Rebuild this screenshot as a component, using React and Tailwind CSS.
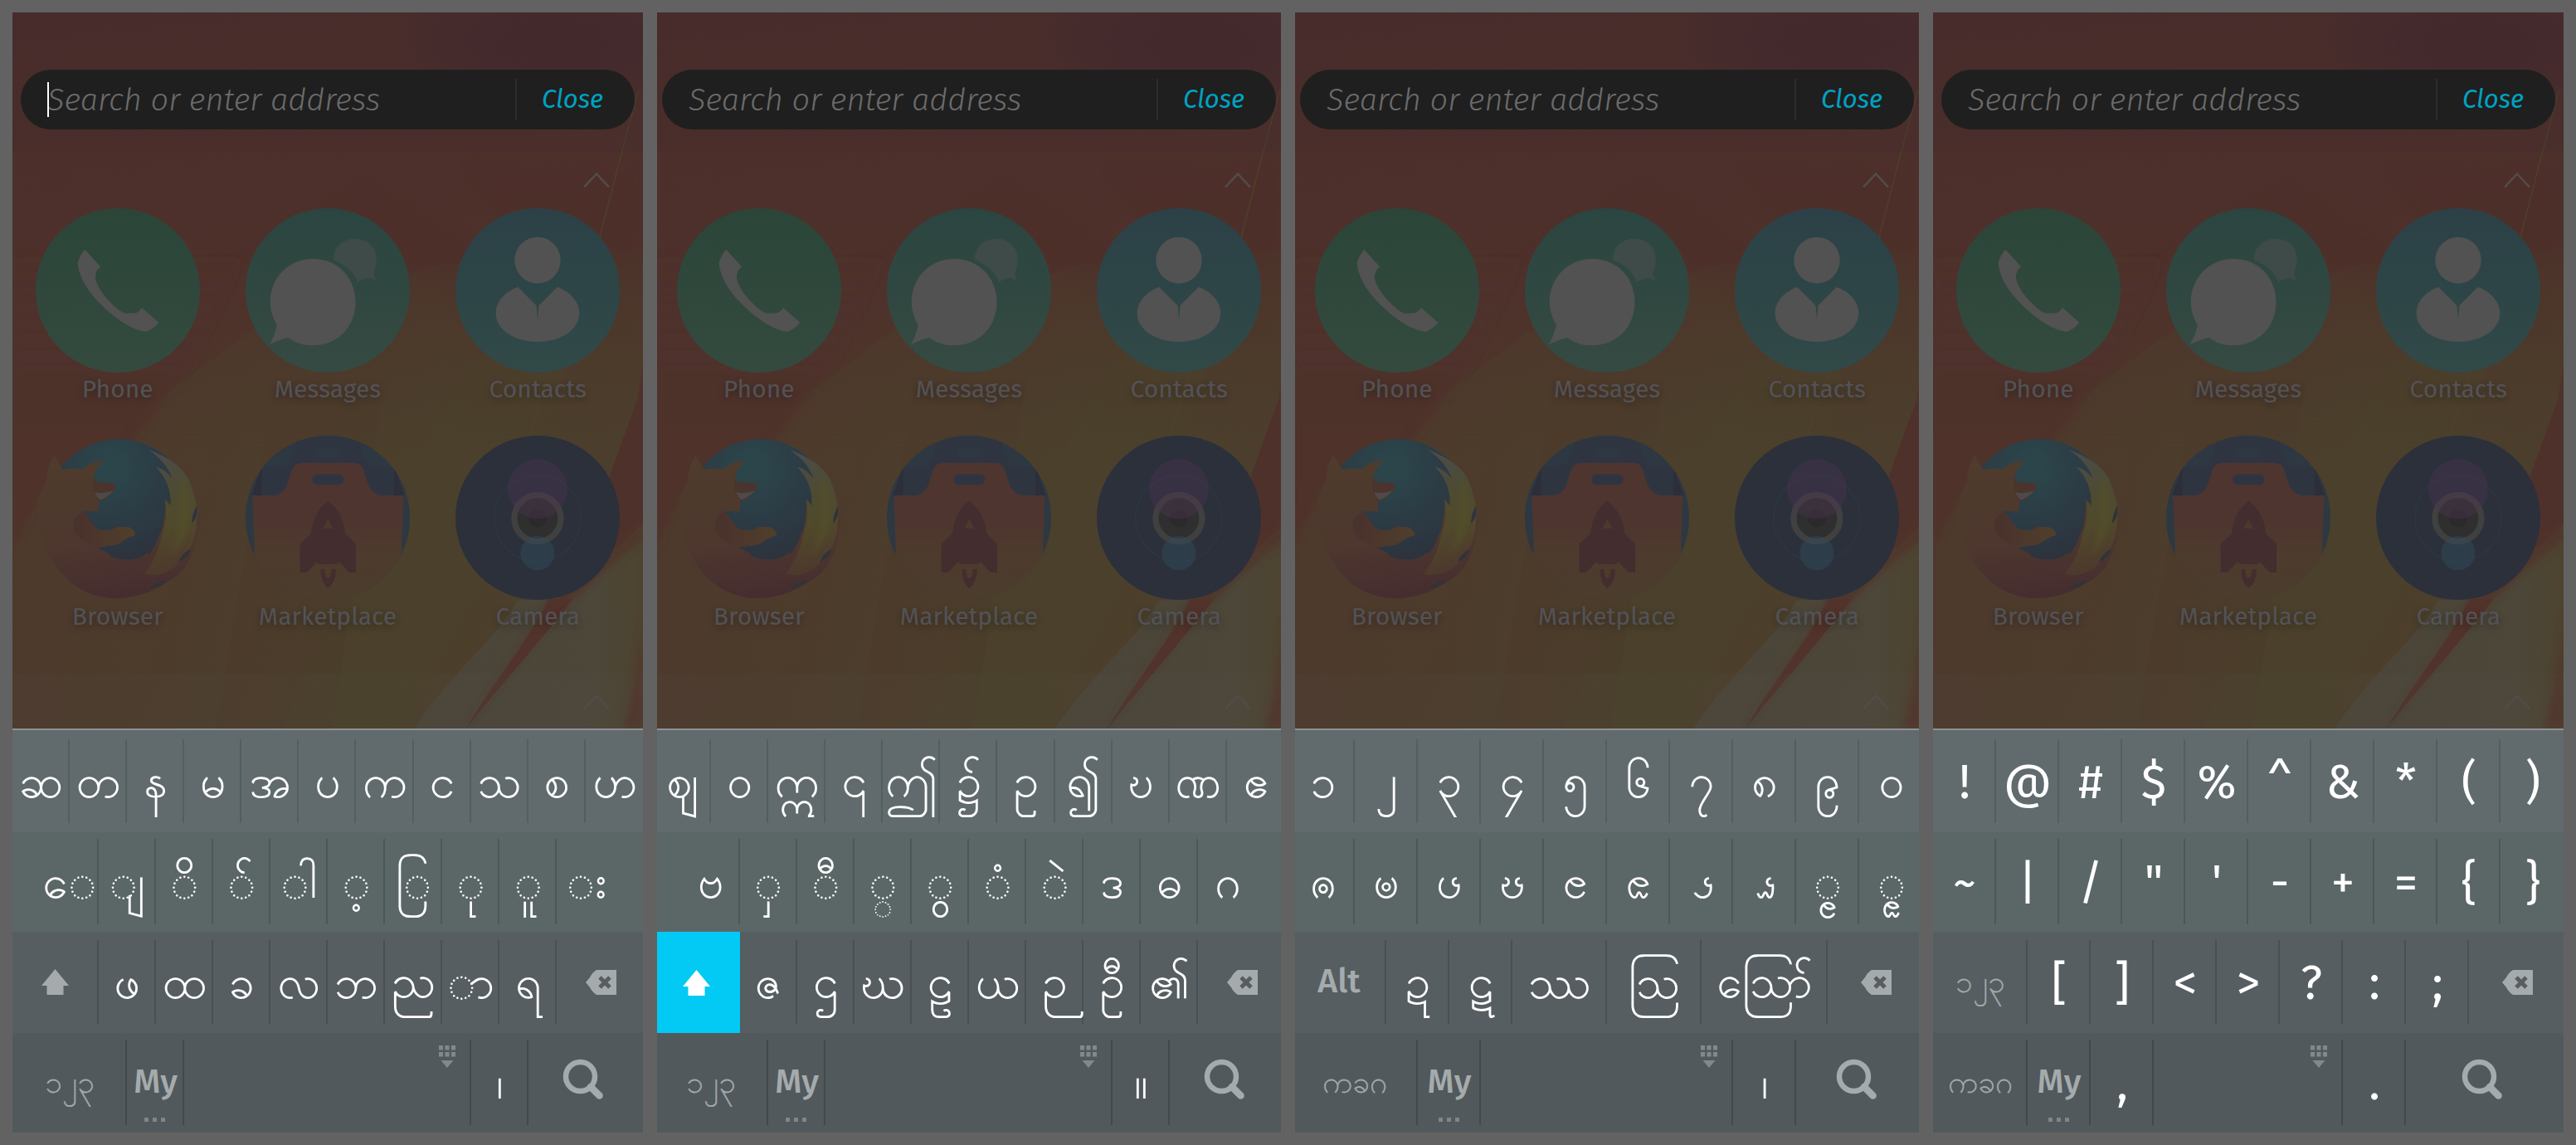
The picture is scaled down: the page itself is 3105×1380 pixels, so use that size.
import React from "react";

const SIZES = {
  key: "text-[55px] leading-[66px] translate-y-[1px]",
  latin: "text-[57px] leading-[68px] translate-y-[1px]",
  label: "text-[41px] leading-[50px] text-[#a5abac] font-medium -translate-y-[1px]",
  small: "text-[37px] leading-[44px] text-[#a0a7a8]",
};

function Wallpaper() {
  return (
    <svg className="absolute inset-0 h-full w-full" viewBox="15 15 760 863" preserveAspectRatio="none">
      <defs>
        <linearGradient id="base" x1="0" y1="0" x2="0.1" y2="1">
          <stop offset="0" stopColor="#4b2e2b" />
          <stop offset="0.4" stopColor="#4e312b" />
          <stop offset="0.65" stopColor="#4d382b" />
          <stop offset="1" stopColor="#4d3c2f" />
        </linearGradient>
        <linearGradient id="olive" x1="0" y1="0" x2="1" y2="0.2">
          <stop offset="0" stopColor="#4d392c" />
          <stop offset="0.35" stopColor="#4d3b2c" />
          <stop offset="0.7" stopColor="#4b402c" />
          <stop offset="1" stopColor="#4c3e2c" />
        </linearGradient>
        <linearGradient id="oliveFade" x1="0" y1="0" x2="0" y2="1">
          <stop offset="0" stopColor="#fff" stopOpacity="0" />
          <stop offset="0.45" stopColor="#fff" />
        </linearGradient>
        <mask id="oliveMask">
          <rect x="0" y="250" width="800" height="650" fill="url(#oliveFade)" />
        </mask>
        <linearGradient id="pale" x1="0" y1="0" x2="1" y2="0">
          <stop offset="0" stopColor="#4b4539" />
          <stop offset="0.8" stopColor="#4c4739" />
          <stop offset="1" stopColor="#4d432f" />
        </linearGradient>
        <linearGradient id="leftRed" x1="0" y1="0" x2="0" y2="1">
          <stop offset="0" stopColor="#4e302b" stopOpacity="0" />
          <stop offset="0.4" stopColor="#4e312c" />
          <stop offset="1" stopColor="#4f332c" />
        </linearGradient>
        <radialGradient id="plum">
          <stop offset="0" stopColor="#472a2d" />
          <stop offset="0.5" stopColor="#472a2d" stopOpacity=".8" />
          <stop offset="1" stopColor="#472a2d" stopOpacity="0" />
        </radialGradient>
        <filter id="soft"><feGaussianBlur stdDeviation="5" /></filter>
      </defs>
      <rect x="15" y="15" width="760" height="863" fill="url(#base)" />
      <ellipse cx="670" cy="50" rx="190" ry="90" fill="url(#plum)" />
      <path d="M250 320L440 220L640 330L560 200H775V430L600 400L430 280Z" fill="#4d2c2b" filter="url(#soft)" opacity=".18" />
      <path d="M140 520L300 400L520 320L775 300V878H15V640Z" fill="url(#olive)" mask="url(#oliveMask)" />
      <path d="M330 470L470 420L400 878H260Z" fill="#4d392c" opacity=".35" />
      <path d="M560 440L690 400L640 600L540 780L490 878H340Z" fill="#4b412c" opacity=".35" />
      <path d="M15 300H300L230 440L150 545L50 590L15 668Z" fill="url(#leftRed)" filter="url(#soft)" />
      <path d="M775 440L768 482L735 573V660H775Z" fill="#4f312b" />
      <path d="M775 632C725 680 690 715 655 722L623 724C600 770 552 800 499 878H775Z" fill="url(#pale)" />
      <path d="M775 628C725 675 700 705 660 722C640 770 600 820 560 878C620 800 660 740 775 650Z" fill="#50352b" filter="url(#soft)" />
      <path d="M662 722H690C650 775 600 830 562 878C595 820 640 770 662 722Z" fill="#51332b" />
      <path d="M775 740C770 800 760 850 752 878H775Z" fill="#51352c" filter="url(#soft)" />
      <path d="M770 108Q750 180 722 290L655 470Q600 650 504 815" fill="none" stroke="#4f442b" strokeWidth="2" opacity=".6" />
      <rect x="15" y="15" width="760" height="168" fill="#222428" opacity=".09" />
      <rect x="15" y="812" width="760" height="66" fill="#5f5f5f" opacity=".08" />
    </svg>
  );
}

function PhoneIcon() {
  return (
    <svg className="block size-[198px]" viewBox="0 0 198 198">
      <defs>
        <linearGradient id="ph" x1="0" y1="0" x2="0" y2="1">
          <stop offset="0" stopColor="#2b4539" />
          <stop offset="1" stopColor="#344a3f" />
        </linearGradient>
      </defs>
      <circle cx="99" cy="99" r="99" fill="url(#ph)" />
      <g transform="translate(-42 -251) scale(.5038 .3333)">
        <path d="M201 902L239 965Q226 975 226 1005Q232 1050 268 1102Q290 1135 302 1133L322 1132Q332 1128 337 1112L378 1166Q362 1194 346 1200Q310 1190 270 1142Q220 1080 200 1025Q184 980 184 950Q188 925 201 902Z" fill="#525252" />
      </g>
    </svg>
  );
}

function MessagesIcon() {
  return (
    <svg className="block size-[198px]" viewBox="0 0 198 198">
      <defs>
        <linearGradient id="ms" x1="0" y1="0" x2="0" y2="1">
          <stop offset="0" stopColor="#2b4540" />
          <stop offset="1" stopColor="#354a42" />
        </linearGradient>
      </defs>
      <circle cx="99" cy="99" r="99" fill="url(#ms)" />
      <g transform="translate(-295.7 -251) scale(.5038 .3333)">
        <path d="M848 863C880 863 900 895 900 935C900 960 896 975 893 990L900 1018Q890 1005 877 1006Q865 1012 854 1020Q845 970 797 940C797 895 818 863 848 863Z" fill="#3e4b49" />
        <path d="M748 936C808 936 850 1005 850 1092C850 1180 808 1249 748 1249C722 1249 704 1238 689 1220Q668 1228 644 1246Q656 1215 662 1176Q646 1135 646 1092C646 1005 690 936 748 936Z" fill="#525252" />
      </g>
    </svg>
  );
}

function ContactsIcon() {
  return (
    <svg className="block size-[198px]" viewBox="0 0 198 198">
      <defs>
        <linearGradient id="ct" x1="0" y1="0" x2="0" y2="1">
          <stop offset="0" stopColor="#2b4147" />
          <stop offset="1" stopColor="#314947" />
        </linearGradient>
      </defs>
      <circle cx="99" cy="99" r="99" fill="url(#ct)" />
      <g transform="translate(-549.4 -251) scale(.5038 .3333)" fill="#525252">
        <ellipse cx="1287" cy="941" rx="55" ry="84" />
        <path d="M1240 1038L1284 1105L1287 1155L1290 1105L1334 1038C1364 1054 1387 1090 1387 1132C1387 1190 1345 1236 1287 1236C1229 1236 1187 1190 1187 1132C1187 1090 1210 1054 1240 1038Z" />
      </g>
    </svg>
  );
}

function BrowserIcon() {
  return (
    <svg className="block size-[198px] overflow-visible" viewBox="0 0 198 198">
      <defs>
        <radialGradient id="globe" cx=".45" cy=".2" r=".8">
          <stop offset="0" stopColor="#2b474c" />
          <stop offset=".5" stopColor="#2c3a44" />
          <stop offset="1" stopColor="#2d2e38" />
        </radialGradient>
        <linearGradient id="fox" x1=".4" y1="0" x2=".5" y2="1">
          <stop offset="0" stopColor="#4f3c2c" />
          <stop offset=".6" stopColor="#4d372e" />
          <stop offset="1" stopColor="#452d30" />
        </linearGradient>
        <linearGradient id="tail" x1=".3" y1="0" x2=".4" y2="1">
          <stop offset="0" stopColor="#4b4c4d" />
          <stop offset=".35" stopColor="#4d4b32" />
          <stop offset=".6" stopColor="#504a2b" />
          <stop offset="1" stopColor="#4d382d" />
        </linearGradient>
        <linearGradient id="arm" x1="0" y1="0" x2="1" y2="0">
          <stop offset="0" stopColor="#4a312d" />
          <stop offset="1" stopColor="#503f2c" />
        </linearGradient>
        <filter id="foxSoft"><feGaussianBlur stdDeviation="10" /></filter>
      </defs>
      <g transform="translate(-12 -15) scale(.3333)">
        <circle cx="336" cy="322" r="264" fill="url(#globe)" />
        <path d="M76 210C76 165 90 135 103 117L124 152L134 168Q165 162 205 166Q240 136 284 136Q250 165 246 198L256 214L318 216Q328 222 324 236L290 272L264 284V318H212Q228 350 255 380Q280 392 310 386L330 376H372Q395 386 397 404Q375 410 360 420Q330 445 290 445Q270 450 258 448Q280 462 302 472Q300 480 310 482Q345 496 385 493Q420 488 440 468L445 474Q470 450 485 400Q500 380 506 276L530 300L575 340L612 350L630 315Q632 380 610 450Q580 540 516 572Q430 630 330 634Q200 632 120 530Q45 430 42 310Q50 250 76 210Z" fill="url(#fox)" />
        <path d="M442 95Q560 140 590 205Q625 290 618 350Q615 460 540 520Q490 560 430 545Q480 480 495 395Q515 340 504 276L524 300Q528 215 470 158Q505 165 530 200Q510 140 442 95Z" fill="url(#tail)" />
        <path d="M560 170Q600 250 585 380Q560 450 520 480Q570 360 556 250Z" fill="#54512a" opacity=".55" filter="url(#foxSoft)" />
        <path d="M246 198Q238 235 252 262L264 284L290 272L324 238L326 222Q310 214 256 214Z" fill="#4b342e" />
        <path d="M250 250Q285 258 318 243Q300 266 270 278Q255 268 250 250Z" fill="#4e4a47" />
        <path d="M212 318Q228 350 255 380Q280 392 310 386L330 376H372Q395 386 397 404Q375 410 360 420Q330 445 290 445Q210 445 178 395Q160 340 212 318Z" fill="url(#arm)" />
        <path d="M552 504Q560 475 594 455Q598 475 552 504ZM448 598Q460 576 508 570Q490 590 448 598ZM600 362Q602 325 618 300Q624 345 600 362Z" fill="#2f333c" />
      </g>
    </svg>
  );
}

function MarketplaceIcon() {
  return (
    <svg className="block size-[198px]" viewBox="0 0 198 198">
      <defs>
        <linearGradient id="bag" x1="0" y1="0" x2="0" y2="1">
          <stop offset="0" stopColor="#4e3530" />
          <stop offset=".4" stopColor="#4e352f" />
          <stop offset=".65" stopColor="#4d3b2d" />
          <stop offset="1" stopColor="#4c3d2d" />
        </linearGradient>
        <clipPath id="disc"><circle cx="99" cy="99" r="99" /></clipPath>
      </defs>
      <g clipPath="url(#disc)">
        <g transform="translate(-15.7 -15) scale(.3333)">
          <rect x="40" y="40" width="610" height="610" fill="#2d3842" />
          <path d="M234 40H456Q470 160 520 160H592L620 262H70L105 160H170Q220 150 234 40Z" fill="#2f3540" />
          <path d="M105 160L70 262H105ZM585 160L620 262H585Z" fill="#2c2e39" />
          <rect x="300" y="90" width="90" height="35" rx="14" fill="#2d3842" />
          <path d="M72 262H140Q185 262 200 215L214 170Q224 144 250 144H440Q466 144 474 170L488 215Q505 262 550 262H618L612 440L616 650H76L79 440Z" fill="url(#bag)" />
          <rect x="288" y="185" width="114" height="38" rx="19" fill="#2f3540" />
          <path d="M345 281Q400 320 408 400L446 436V540H422L386 502L376 510H315L305 502L268 540H244V436L284 400Q292 320 345 281Z" fill="#442d2f" />
          <path d="M345 346L363 382Q345 378 328 382Z" fill="#4e382e" />
          <path d="M318 528H334Q334 560 345 560Q357 560 357 528H374Q374 575 345 597Q318 575 318 528Z" fill="#442d2f" />
        </g>
      </g>
    </svg>
  );
}

function CameraIcon() {
  return (
    <svg className="block size-[198px]" viewBox="0 0 198 198">
      <circle cx="99" cy="99" r="99" fill="#2b303b" />
      <g transform="translate(-9.4 -15) scale(.3333)">
        <circle cx="325" cy="344" r="156" fill="none" stroke="#2c3543" strokeWidth="6" />
        <circle cx="325" cy="344" r="84" fill="#2f2f2f" stroke="#404040" strokeWidth="22" />
        <circle cx="325" cy="344" r="32" fill="#2a2a2a" />
        <circle cx="325" cy="238" r="108" fill="#4a3450" opacity=".42" />
        <circle cx="325" cy="470" r="62" fill="#2f4a57" opacity=".5" />
      </g>
    </svg>
  );
}

const APPS = [
  ["Phone", PhoneIcon],
  ["Messages", MessagesIcon],
  ["Contacts", ContactsIcon],
  ["Browser", BrowserIcon],
  ["Marketplace", MarketplaceIcon],
  ["Camera", CameraIcon],
];

function Chevron({ className }) {
  return (
    <svg className={className} viewBox="0 0 32 18" fill="none" stroke="currentColor" strokeWidth="2.500">
      <path d="M1 17.500L16 1.500L31 17.500" />
    </svg>
  );
}

function HomeScreen({ caret }) {
  return (
    <div className="relative h-[863px] overflow-hidden">
      <Wallpaper />
      <div className="relative flex h-full flex-col">
        <div className="mx-[10px] mt-[69px] flex h-[72px] shrink-0 items-center rounded-full bg-[#1f1f1f]">
          <div className="relative ml-[32px] flex-1 text-[38px] leading-[50px] font-light italic tracking-[0.04px] text-[#6b6b6b]">
            {caret && <span className="absolute top-[4px] left-0 h-[42px] w-[2px] bg-white" />}
            Search or enter address
          </div>
          <div className="h-[50px] w-[2px] bg-[#2c2c2c]" />
          <div className="w-[142px] pr-[8px] text-center text-[31px] italic text-[#00a2c2]">Close</div>
        </div>
        <Chevron className="mt-[52px] mr-[40px] h-[18px] w-[32px] self-end text-[#524d4b]" />
        <div className="mt-[25px] grid grid-cols-3">
          {APPS.map(([name, Icon]) => (
            <div key={name} className="flex h-[274px] flex-col items-center">
              <Icon />
              <div className="mt-[2px] text-[30px] leading-[36px] text-[#535256] [text-shadow:0_3px_8px_rgba(0,0,0,0.3)]">{name}</div>
            </div>
          ))}
        </div>
        <Chevron className="mt-[38px] mr-[40px] h-[18px] w-[32px] self-end text-[#504c4b]" />
      </div>
    </div>
  );
}

function Shift({ active }) {
  return (
    <svg className={active ? "h-[31px] w-[33px] text-white" : "h-[31px] w-[33px] text-[#a5abac]"} viewBox="0 0 33 31">
      <path d="M16.500 0L33 20H26.500V31H6.500V20H0Z" fill="currentColor" />
    </svg>
  );
}

function Backspace() {
  return (
    <svg className="h-[32px] w-[37px]" viewBox="0 0 37 32">
      <path d="M13 1H37V31H13Q8 28 5 22L0 16L5 10Q8 4 13 1Z" fill="#a5abac" />
      <path d="M17 10L29 22M29 10L17 22" stroke="#565e61" strokeWidth="5" />
    </svg>
  );
}

function Search() {
  return (
    <svg className="h-[50px] w-[50px]" viewBox="0 0 50 50" fill="none" stroke="#a5abac">
      <circle cx="21.500" cy="21.500" r="17.500" strokeWidth="6.500" />
      <path d="M34 34L44.500 44.500" strokeWidth="8.500" strokeLinecap="round" />
    </svg>
  );
}

function HideKeyboard() {
  return (
    <svg className="h-[27px] w-[20px]" viewBox="0 0 20 27" fill="#82898b">
      {[0, 7.5, 15].map((x) => (
        <React.Fragment key={x}>
          <rect x={x} y="0" width="5" height="5.500" />
          <rect x={x} y="8" width="5" height="5.500" />
        </React.Fragment>
      ))}
      <path d="M2.500 18H17.500L10 27Z" />
    </svg>
  );
}

function Content({ k }) {
  switch (k.t) {
    case "shift":
      return <Shift />;
    case "shiftOn":
      return <Shift active />;
    case "back":
      return <Backspace />;
    case "search":
      return <div className="-mt-[8px] mr-[8px]"><Search /></div>;
    case "space":
      return null;
    case "My":
      return (
        <>
          <span className={SIZES.label}>My</span>
          <span className="absolute inset-x-0 bottom-[4px] flex justify-center gap-[5px]">
            <i className="h-[5px] w-[5px] bg-[#848484]" />
            <i className="h-[5px] w-[5px] bg-[#848484]" />
            <i className="h-[5px] w-[5px] bg-[#848484]" />
          </span>
        </>
      );
    default:
      return (
        <span className={SIZES[k.s || "key"]}>
          {k.vowel ? <span className="font-['Padauk'] leading-[0]">{k.t}</span> : k.t}
        </span>
      );
  }
}

const ROW_STYLES = [
  "h-[123px] bg-[#616b6d] pt-[11px] pb-[11px]",
  "h-[120px] bg-[#5b6667] pt-[8px] pb-[9px]",
  "h-[122px] bg-[#565e61] pt-[10px] pb-[11px]",
  "h-[120px] bg-[#51595c] pt-[8px] pb-[9px]",
];

const LINES = [
  "border-[#525e5f]",
  "border-[#4c5858]",
  "border-[#485053]",
  "border-[#42494c]",
];

function Keyboard({ rows }) {
  return (
    <div>
      <div className="h-[2px] bg-[#8e9294]" />
      {rows.map((row, r) => {
        const units = row.reduce((sum, k) => sum + (k.w || 1), 0);
        return (
          <div key={r} className={`flex ${ROW_STYLES[r]}`}>
            {row.map((k, i) => (
              <div
                key={i}
                className={`relative flex shrink-0 items-center justify-center whitespace-nowrap ${
                  k.t === "shiftOn" ? "-mt-[10px] -mb-[11px] bg-[#02caf4]" : "pl-[2px]"
                } ${i < row.length - 1 && k.t !== "shiftOn" ? `border-r-2 ${LINES[r]}` : ""}`}
                style={{ width: `${((k.w || 1) / units) * 100}%` }}
              >
                {k.nudge ? (
                  <div className={`flex ${k.nudge}`}>
                    <Content k={k} />
                  </div>
                ) : (
                  <Content k={k} />
                )}
                {k.t === "space" && (
                  <div className="absolute top-[7px] right-[17px]">
                    <HideKeyboard />
                  </div>
                )}
              </div>
            ))}
          </div>
        );
      })}
    </div>
  );
}

const keys = (text, s) => text.split(" ").map((t) => ({ t, s }));
const back = { t: "back", w: 1.5, nudge: "ml-0" };

const BASE = [
  keys("ဆ တ န မ အ ပ က င သ စ ဟ"),
  [
    { t: "ေ", w: 1.5, nudge: "ml-[34px]" },
    ...keys("ျ ိ ် ါ ့ ြ ု ူ"),
    { t: "း", w: 1.5, nudge: "mr-[34px]" },
  ],
  [{ t: "shift", w: 1.5 }, ...keys("ဖ ထ ခ လ ဘ ည ာ ရ"), back],
  [{ t: "၁၂၃", w: 2, s: "small" }, { t: "My" }, { t: "space", w: 5 }, { t: "၊" }, { t: "search", w: 2 }],
];

const SHIFTED = [
  keys("ဈ ဝ ဣ ၎ ဤ ၌ ဥ ၍ ဎ ဏ ဧ"),
  [
    { t: "ဗ", w: 1.5, nudge: "ml-[34px]" },
    ...keys("ှ ီ ္ ွ ံ ဲ ဒ ဓ"),
    { t: "ဂ", w: 1.5, nudge: "mr-[34px]" },
  ],
  [{ t: "shiftOn", w: 1.5 }, ...keys("ဇ ဌ ဃ ဠ ယ ဉ ဦ ၏"), back],
  [{ t: "၁၂၃", w: 2, s: "small" }, { t: "My" }, { t: "space", w: 5 }, { t: "။" }, { t: "search", w: 2 }],
];

const NUMERIC = [
  keys("၁ ၂ ၃ ၄ ၅ ၆ ၇ ၈ ၉ ၀"),
  [
    ...keys("ၐ ၑ ၒ ၓ ၔ ၕ"),
    { t: "\u00a0ၖ", vowel: true, nudge: "mr-[18px]" },
    { t: "\u00a0ၗ", vowel: true, nudge: "mr-[18px]" },
    ...keys("ၘ ၙ"),
  ],
  [
    { t: "Alt", w: 1.5, s: "label" },
    ...keys("ဍ ဋ"),
    { t: "ဿ", w: 1.5 },
    { t: "ဩ", w: 1.5 },
    { t: "ဪ", w: 2 },
    back,
  ],
  [{ t: "ကခဂ", w: 2, s: "small" }, { t: "My" }, { t: "space", w: 4 }, { t: "၊" }, { t: "search", w: 2 }],
];

const SYMBOLS = [
  keys("! @ # $ % ^ & * ( )", "latin"),
  keys("~ | / \" ' - + = { }", "latin"),
  [{ t: "၁၂၃", w: 1.5, s: "small" }, ...keys("[ ] < > ? : ;", "latin"), back],
  [
    { t: "ကခဂ", w: 1.5, s: "small" },
    { t: "My" },
    { t: ",", s: "latin" },
    { t: "space", w: 3 },
    { t: ".", s: "latin" },
    { t: "search", w: 2.5 },
  ],
];

function Screen({ rows, caret, narrow, className }) {
  return (
    <div className={`flex h-[1350px] shrink-0 justify-center overflow-hidden ${narrow ? "w-[752px]" : "w-[760px]"} ${className || ""}`}>
      <div className="w-[760px] shrink-0">
        <HomeScreen caret={caret} />
        <Keyboard rows={rows} />
      </div>
    </div>
  );
}

export default function App() {
  return (
    <div className="flex h-[1380px] w-[3105px] overflow-hidden bg-[#626262] pt-[15px] pl-[15px] font-['Fira_Sans','Padauk','Noto_Sans_Myanmar','Open_Sans',sans-serif] text-white">
      <Screen rows={BASE} caret />
      <Screen rows={SHIFTED} narrow className="ml-[17px]" />
      <Screen rows={NUMERIC} narrow className="ml-[17px]" />
      <Screen rows={SYMBOLS} className="ml-[17px]" />
    </div>
  );
}
